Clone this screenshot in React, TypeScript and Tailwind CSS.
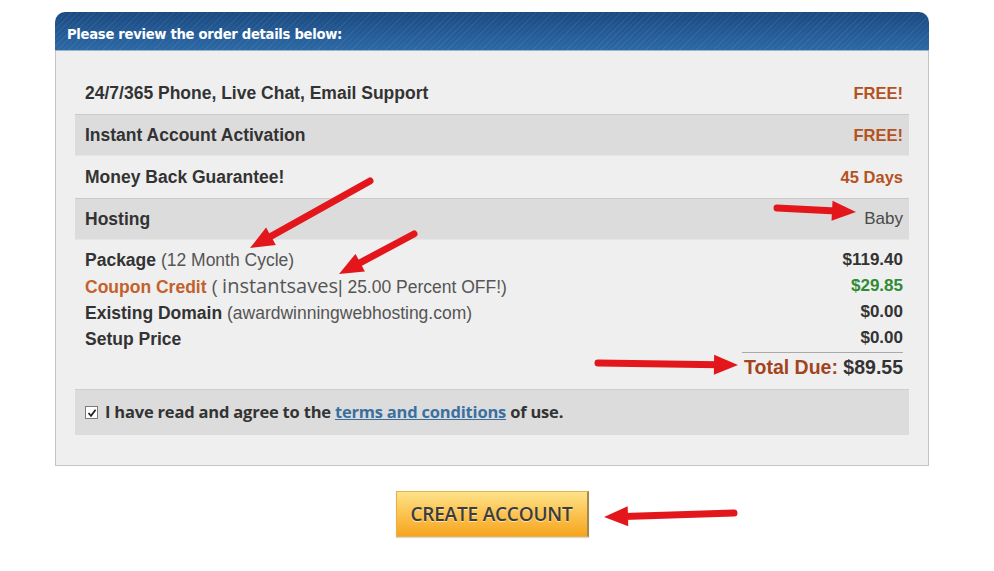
import React from "react";

// Red annotation arrows drawn over the form
const arrows = [
  { x1: 370, y1: 181, x2: 250, y2: 248 },
  { x1: 414, y1: 234, x2: 339, y2: 274 },
  { x1: 777, y1: 208, x2: 856, y2: 212 },
  { x1: 598, y1: 363, x2: 738, y2: 365 },
  { x1: 734, y1: 513, x2: 604, y2: 517 },
];

const Arrow = ({ x1, y1, x2, y2 }: { x1: number; y1: number; x2: number; y2: number }) => {
  const a = Math.atan2(y2 - y1, x2 - x1);
  const len = 24;
  const half = 10;
  const bx = x2 - Math.cos(a) * len;
  const by = y2 - Math.sin(a) * len;
  const px = -Math.sin(a) * half;
  const py = Math.cos(a) * half;
  return (
    <g>
      <line x1={x1} y1={y1} x2={bx + Math.cos(a) * 4} y2={by + Math.sin(a) * 4} stroke="#e3171b" strokeWidth={7} strokeLinecap="round" />
      <polygon points={`${x2},${y2} ${bx + px},${by + py} ${bx - px},${by - py}`} fill="#e3171b" />
    </g>
  );
};

const Row = ({ label, value, gray, valueClass }: { label: string; value: string; gray?: boolean; valueClass: string }) => (
  <div
    className={`flex items-center justify-between pl-[10px] pr-[6px] h-[42px] ${
      gray ? "bg-[#dcdcdc] border-t border-[#cbcbcb] border-b border-b-[#e6e6e6]" : ""
    }`}
  >
    <span className="font-bold text-[17.5px] text-[#333]">{label}</span>
    <span className={valueClass}>{value}</span>
  </div>
);

export default function App() {
  return (
    <div
      className="relative w-[994px] h-[571px] bg-white overflow-hidden"
      style={{ fontFamily: '"Liberation Sans", Arial, sans-serif' }}
    >
      <div className="ml-[55px] pt-[12px] w-[874px]">
        {/* header */}
        <div className="relative h-[39px] rounded-t-[10px] overflow-hidden flex items-center pl-[12px] pt-[8px] bg-[linear-gradient(180deg,#1b4a80_0%,#245b96_55%,#2c68a4_100%)] border-b border-[#9db3c9]">
          <div className="absolute inset-0 bg-[repeating-linear-gradient(135deg,rgba(255,255,255,0.06)_0px,rgba(255,255,255,0.06)_1px,transparent_1px,transparent_4px)]" />
          <span
            className="relative text-white font-bold text-[13.2px]"
            style={{ fontFamily: '"DejaVu Sans", Verdana, sans-serif', letterSpacing: "-0.3px" }}
          >
            Please review the order details below:
          </span>
        </div>

        {/* body */}
        <div className="h-[415px] bg-[#efefef] border border-t-0 border-[#c4c4c4] px-[19px] pt-[21px]">
          <Row label="24/7/365 Phone, Live Chat, Email Support" value="FREE!" valueClass="font-bold text-[16.5px] text-[#b4521f]" />
          <Row label="Instant Account Activation" value="FREE!" gray valueClass="font-bold text-[16.5px] text-[#b4521f]" />
          <Row label="Money Back Guarantee!" value="45 Days" valueClass="font-bold text-[16.5px] text-[#b4521f]" />
          <Row label="Hosting" value="Baby" gray valueClass="text-[17px] text-[#4a4a4a]" />

          {/* package details */}
          <div className="flex justify-between pl-[10px] pr-[6px] pt-[7px] text-[17.5px] leading-[26px]">
            <div className="text-[#333]">
              <div>
                <span className="font-bold">Package</span> <span className="text-[#555]">(12 Month Cycle)</span>
              </div>
              <div className="text-[#555]">
                <span className="font-bold text-[#c2612b]">Coupon Credit</span> ({" "}
                <span className="text-[20px] text-[#555]" style={{ fontFamily: '"Open Sans", sans-serif' }}>
                  instantsaves
                </span>
                | 25.00 Percent OFF!)
              </div>
              <div>
                <span className="font-bold">Existing Domain</span>{" "}
                <span className="text-[#555]">(awardwinningwebhosting.com)</span>
              </div>
              <div className="font-bold">Setup Price</div>
            </div>
            <div className="flex flex-col items-end font-bold text-[17px]">
              <div className="text-[#333]">$119.40</div>
              <div className="text-[#2e8a35]">$29.85</div>
              <div className="text-[#333]">$0.00</div>
              <div className="text-[#333]">$0.00</div>
              <div className="mt-[1px] border-t border-[#a9a9a9] pt-[1px] text-[19.5px] leading-[26px] pl-[2px]">
                <span className="text-[#a2441c]">Total Due:</span> <span className="text-[#333]">$89.55</span>
              </div>
            </div>
          </div>

          {/* terms */}
          <div className="mt-[9px] h-[46px] bg-[#dcdcdc] border-t border-[#cfcfcf] flex items-center pl-[10px]">
            <span className="w-[13px] h-[13px] bg-white border border-[#7a7a7a] flex items-center justify-center mr-[7px]">
              <svg width="10" height="10" viewBox="0 0 10 10">
                <path d="M1.5 5 L4 7.8 L8.6 1.8" stroke="#222" strokeWidth="1.8" fill="none" />
              </svg>
            </span>
            <span
              className="text-[16.5px] font-bold text-[#333]"
              style={{ fontFamily: '"Open Sans", sans-serif', letterSpacing: "-0.2px" }}
            >
              I have read and agree to the{" "}
              <span className="text-[#3b6f9e] underline decoration-[#3b6f9e]">terms and conditions</span> of use.
            </span>
          </div>
        </div>
      </div>

      {/* button */}
      <div className="flex justify-center pt-[25px] pr-[10px]">
        <div className="w-[193px] h-[46px] flex items-center justify-center bg-[linear-gradient(180deg,#fde38c_0%,#fcc655_45%,#f6a51e_100%)] border border-[#e6b04a] border-r-[2px] border-r-[#a88752] shadow-[0_1px_1px_rgba(0,0,0,0.15)]">
          <span
            className="text-[19px] text-[#3c3c3c] font-semibold"
            style={{ fontFamily: '"Open Sans", sans-serif', textShadow: "0 1px 0 rgba(255,255,255,0.6)", letterSpacing: "-0.2px" }}
          >
            CREATE ACCOUNT
          </span>
        </div>
      </div>

      <svg className="absolute inset-0 pointer-events-none" width="994" height="571">
        {arrows.map((a, i) => (
          <Arrow key={i} {...a} />
        ))}
      </svg>
    </div>
  );
}
